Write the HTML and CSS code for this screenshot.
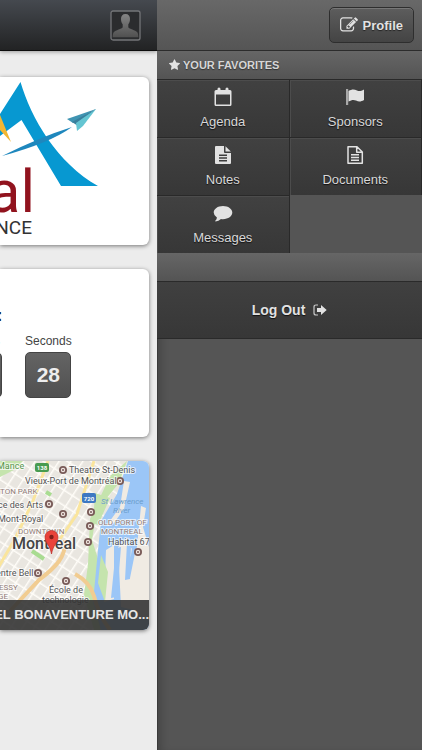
FILE: index.html
```html
<!DOCTYPE html>
<html lang="en">
<head>
<meta charset="utf-8">
<meta name="viewport" content="width=device-width, initial-scale=1">
<title>Event</title>
<link rel="stylesheet" href="styles.css">
</head>
<body>
<div class="app">
  <main class="page">
    <header class="topbar">
      <button class="avatar" aria-label="Account">
        <svg viewBox="0 0 31 31" width="31" height="31" aria-hidden="true">
          <defs><linearGradient id="person" x1="0" y1="0" x2="0" y2="1"><stop offset="0" stop-color="#858585"/><stop offset="1" stop-color="#505050"/></linearGradient></defs>
          <rect x="1" y="1" width="29" height="29" rx="2" fill="#2b2c2e" stroke="#747578" stroke-width="1.3"/>
          <path fill="url(#person)" d="M15.500 4c3 0 4.600 2 4.500 5 0 2-.6 4-1.700 5.300v3c1 2 7 2.600 9 5 .8 1 1 3 1 5H2.700c0-2 .2-4 1-5 2-2.400 8-3 9-5v-3C11.600 13 11 11 11 9c-.1-3 1.500-5 4.500-5z"/>
        </svg>
      </button>
    </header>
    <div class="cards">
      <section class="card">
        <svg class="art" viewBox="0 77 149 168" preserveAspectRatio="xMaxYMid slice" role="img" aria-label="Conference logo">
          <path fill="#0798d1" d="M0 114 20.500 82C31 118 57 163 98 186H61L21.500 120 0 136z"/>
          <path fill="#f2b632" d="M0 115 11 142 0 130z"/>
          <path fill="#1e87bd" d="M2 156Q40 137 72 127Q50 143 2 156z"/>
          <path fill="#3f94b2" d="M96 109 67 119 73 123z"/>
          <path fill="#397f9c" d="M96 109 72 122 78 126z"/>
          <path fill="#64c5d2" d="M96 109 76 123 77 131 83 126z"/>
          <text class="logo-name" x="35" y="212" text-anchor="end">al</text>
          <text class="logo-sub" x="32" y="234" text-anchor="end">NCE</text>
        </svg>
      </section>
      <section class="card countdown">
        <h2 class="countdown-title">:</h2>
        <div class="units">
          <div class="unit"><span>Minutes</span><b></b></div>
          <div class="unit"><span>Seconds</span><b>28</b></div>
        </div>
      </section>
      <section class="card map">
        <svg class="art" viewBox="0 461 149 169" preserveAspectRatio="xMaxYMid slice" role="img" aria-label="Map of Montreal">
          <defs>
            <pattern id="blocks" width="13" height="10" patternUnits="userSpaceOnUse" patternTransform="rotate(-57)"><rect width="13" height="10" fill="#e9e6e0"/><path d="M0 0H13M0 0V10" stroke="#fffdf8" stroke-width="3"/></pattern>
            <g id="poi"><circle r="4" fill="#795b58"/><circle r="2.200" fill="#eee4df"/><circle r="1" fill="#795b58"/></g>
          </defs>
          <rect y="461" width="149" height="169" fill="url(#blocks)"/>
          <path fill="#c5e4ad" d="M0 461h23l-9 9L0 477zM127 461l-8 22-22 27-5 30 8 25 7 65h-13l-10-35 4-31 2-45 20-43z"/>
          <path fill="#9bc6f7" d="M128 461h21v169h-48l-8-28 5-52 3-29 16-27z"/>
          <path fill="#f0ebe3" d="M124 481l6 1-6 27-10 14-7 2 13-18zM141 506l5 2-3 19 6 20v72h-15l-3-61 6-11zM106 550l8-5v54l-10 3zM118 547l8-5 8 9v59l-13-3z"/>
          <path fill="#9bc6f7" d="M116 548l5-1-4 50-6 1zM127 543l4 1-1 35-5 1zM132 548l4 0-6 30-2-2z"/>
          <path fill="#c5e4ad" d="M95 493l15 5-12 27-5-2zM101 555l7 17-3 30-7-19z"/>
          <path d="M48 461 33 501 15 539-2 568M94 461 77 514 60 539" fill="none" stroke="#fae59d" stroke-width="3"/>
          <path d="M65 540C66 557 56 567 39 580L10 611M75 574q15 8 19 22 4 18 16 34" fill="none" stroke="#f1cc91" stroke-width="4"/>
          <path d="M32 551l12 8M46 492l5 3" stroke="#a9dc91" stroke-width="4"/>
          <rect x="35" y="463" width="14" height="9" rx="2" fill="#489b50"/><text class="road" x="42" y="470">138</text>
          <rect x="82" y="493" width="14" height="10" rx="2" fill="#3e78c2"/><text class="road" x="89" y="501">720</text>
          <use href="#poi" x="63" y="470"/><use href="#poi" x="120" y="481"/><use href="#poi" x="49" y="504"/><use href="#poi" x="63" y="514"/><use href="#poi" x="91" y="512"/><use href="#poi" x="90" y="526"/><use href="#poi" x="88" y="542"/><use href="#poi" x="138" y="552"/><use href="#poi" x="38" y="573"/><use href="#poi" x="66" y="581"/>
          <g class="label">
            <text class="park" x="-3" y="469">Mance</text>
            <text x="69" y="473">Theatre St-Denis</text>
            <text x="25" y="484">Vieux-Port de Montréal</text>
            <text class="area" x="0" y="494">TON PARK</text>
            <text x="-2" y="508">ce des Arts</text>
            <text x="-2" y="522">Mont-Royal</text>
            <text class="area" x="18" y="534">DOWNTOWN</text>
            <text class="river" x="101" y="504">St Lawrence</text>
            <text class="river" x="113" y="513">River</text>
            <text class="area" x="98" y="525">OLD PORT OF</text>
            <text class="area" x="101" y="534">MONTREAL</text>
            <text x="108" y="545">Habitat 67</text>
            <text x="-4" y="576">entre Bell</text>
            <text class="area" x="-1" y="590">ESSY</text>
            <text class="area" x="-2" y="599">GE</text>
            <text x="49" y="593">École de</text>
            <text x="42" y="603">technologie</text>
            <text class="city" x="12" y="549">Montreal</text>
          </g>
          <path fill="#e9433b" stroke="#b8312b" stroke-width=".7" d="M51.500 554C50 545 45 543 45 537a6.500 6.500 0 0 1 13 0c0 6-5 8-6.500 17z"/><circle cx="51.500" cy="537" r="2.200" fill="#801d1a"/>
        </svg>
        <p class="caption">EL BONAVENTURE MO...</p>
      </section>
    </div>
  </main>

  <aside class="drawer">
    <header class="drawer-head">
      <button class="profile">
        <svg viewBox="0 0 1792 1792" width="18" height="18" aria-hidden="true"><path d="M888 1184l116-116-152-152-116 116v56h96v96h56zm440-720q-16-16-33 1l-350 350q-17 17-1 33t33-1l350-350q17-17 1-33zm80 594v190q0 119-84.500 203.500t-203.500 84.500h-832q-119 0-203.500-84.500t-84.500-203.500v-832q0-119 84.500-203.500t203.500-84.500h832q63 0 117 25 15 7 18 23 3 17-9 29l-49 49q-14 14-32 8-23-6-45-6h-832q-66 0-113 47t-47 113v832q0 66 47 113t113 47h832q66 0 113-47t47-113v-126q0-13 9-22l64-64q15-15 35-7t20 29zm-96-738l288 288-672 672h-288v-288zm444 132l-92 92-288-288 92-92q28-28 68-28t68 28l152 152q28 28 28 68t-28 68z"/></svg>
        Profile
      </button>
    </header>
    <h2 class="strip">
      <svg viewBox="0 0 1664 1792" width="11" height="12" aria-hidden="true"><path d="M1664 647q0 22-26 48l-363 354 86 500q1 7 1 20 0 21-10.500 35.500t-30.500 14.500q-19 0-40-12l-449-236-449 236q-22 12-40 12-21 0-31.500-14.500t-10.500-35.500q0-6 2-20l86-500-364-354q-25-27-25-48 0-37 56-46l502-73 225-455q19-41 49-41t49 41l225 455 502 73q56 9 56 46z"/></svg>
      YOUR FAVORITES
    </h2>
    <nav class="tiles">
      <a class="tile" href="#agenda">
        <svg viewBox="0 0 20 20" width="20" height="20" aria-hidden="true"><path fill-rule="evenodd" d="M3 3h1.500V2q0-1.500 1.500-1.500T7.500 2v1h5V2q0-1.500 1.500-1.500T15.500 2v1H17q1.500 0 1.500 1.500v13Q18.500 19 17 19H3q-1.500 0-1.500-1.500v-13Q1.500 3 3 3zM3 7.500v10h14v-10z"/></svg>
        Agenda
      </a>
      <a class="tile" href="#sponsors">
        <svg viewBox="0 0 20 20" width="20" height="20" aria-hidden="true"><path fill="#a8a8a8" d="M1 2h2.200v16H1z"/><path d="M3.500 4C7 2 9 2 12 3.500c2.500 1.200 4 .5 7-1V13c-3 1.700-5 2-8 .6-2.500-1.200-4.500-.6-7.500.9z"/></svg>
        Sponsors
      </a>
      <a class="tile" href="#notes">
        <svg viewBox="0 0 20 20" width="20" height="20" aria-hidden="true"><path fill-rule="evenodd" d="M3 1h8v6q0 1 1 1h6v10q0 1-1 1H3q-1 0-1-1V2q0-1 1-1zM6 9.500V11h8V9.500zM6 12.300v1.400h8v-1.400zM6 15v1.500h8V15z"/><path d="M12.500 1.200 17.800 6.500h-5.300z"/></svg>
        Notes
      </a>
      <a class="tile" href="#documents">
        <svg viewBox="0 0 20 20" width="20" height="20" aria-hidden="true"><path fill="none" stroke="#e2e2e2" stroke-width="1.500" stroke-linejoin="round" d="M3 1.700h9L17.300 7v11.300H3zM11.700 2v5.300H17"/><path d="M6 9h8v1.400H6zM6 11.800h8v1.400H6zM6 14.600h8V16H6z"/></svg>
        Documents
      </a>
      <a class="tile" href="#messages">
        <svg viewBox="0 0 20 20" width="20" height="20" aria-hidden="true"><path d="M10 3c5.300 0 9.300 2.900 9.300 6.600s-4 6.600-9.300 6.600q-1 0-2-.2-2.300 2.300-5.500 2.500-.7-.3 0-.9 1.300-1.200 1.400-3.100Q.700 12.500.700 9.600C.700 5.900 4.700 3 10 3z"/></svg>
        Messages
      </a>
    </nav>
    <div class="strip"></div>
    <button class="logout">
      Log Out
      <svg viewBox="0 0 14 12" width="14" height="12" aria-hidden="true"><path fill="none" stroke="#c9c9c9" stroke-width="1.200" d="M5 1H3Q1 1 1 3v6q0 2 2 2h2"/><path d="M4 4h4V1l5.700 5L8 11V8H4z"/></svg>
    </button>
  </aside>
</div>
</body>
</html>
```
FILE: styles.css
```css
* {
  box-sizing: border-box;
}

body {
  margin: 0;
  background: #555;
  color: #e2e2e2;
  font-family: "Liberation Sans", Arial, sans-serif;
}

button {
  font: inherit;
  color: inherit;
  border: 0;
  cursor: pointer;
}

svg {
  display: block;
  fill: #e2e2e2;
}

.app {
  display: grid;
  grid-template-columns: 1fr 265px;
  min-height: 100vh;
}

/* Page pushed aside by the drawer */
.page {
  min-width: 0;
  background: #ececec;
}

.topbar {
  display: flex;
  align-items: center;
  justify-content: flex-end;
  height: 51px;
  padding-right: 16px;
  background: linear-gradient(#45494f, #222324);
  border-bottom: 1px solid #0c0c0c;
  box-shadow: 0 1px 4px rgba(0, 0, 0, 0.35);
}

.avatar {
  padding: 0;
  background: none;
}

.cards {
  display: grid;
  gap: 24px;
  padding: 26px 8px 24px 0;
}

.card {
  height: 168px;
  overflow: hidden;
  background: #fff;
  border-radius: 0 6px 6px 0;
  box-shadow: 0 1px 4px rgba(0, 0, 0, 0.5);
}

.art {
  width: 100%;
  height: 100%;
}

.logo-name {
  font: 60px Roboto, sans-serif;
  fill: #91131e;
}

.logo-sub {
  font: 19px Roboto, sans-serif;
  fill: #333;
}

.countdown {
  padding-top: 38px;
  color: #444;
}

.countdown-title {
  margin: 0 0 9px -3px;
  font-size: 16px;
  line-height: 18px;
  color: #111;
}

.units {
  display: flex;
  justify-content: flex-end;
  gap: 23px;
  padding-right: 78px;
}

.unit {
  flex: none;
  display: grid;
  justify-items: center;
  gap: 3px;
  width: 46px;
  font-size: 12px;
  line-height: 15px;
}

.unit b {
  width: 46px;
  height: 46px;
  border: 1px solid #444;
  border-radius: 5px;
  background: linear-gradient(#646464, #505050);
  color: #eee;
  font-size: 21px;
  line-height: 44px;
  text-align: center;
}

.map {
  position: relative;
  height: 169px;
}

.label {
  font: 9px Roboto, sans-serif;
  fill: #555;
  stroke: #fff;
  stroke-width: 2px;
  stroke-opacity: 0.7;
  paint-order: stroke;
}

.label .area {
  font-size: 8px;
  fill: #927c76;
}

.label .park {
  fill: #56954a;
}

.label .river {
  font-size: 8px;
  font-style: italic;
  fill: #6b9dcc;
  stroke: none;
}

.label .city {
  font-size: 16px;
  font-weight: 500;
  fill: #444;
}

.road {
  font: bold 6px Roboto, sans-serif;
  fill: #fff;
  text-anchor: middle;
}

.caption {
  position: absolute;
  right: 0;
  bottom: 0;
  left: 0;
  display: flex;
  justify-content: flex-end;
  margin: 0;
  background: rgba(52, 52, 52, 0.9);
  color: #e6e6e6;
  font-size: 13px;
  font-weight: bold;
  line-height: 30px;
  white-space: nowrap;
}

/* Drawer */
.drawer {
  background: #555;
  box-shadow: inset 1px 0 0 #3a3a3a, inset 8px 0 8px -4px rgba(0, 0, 0, 0.2);
}

.drawer-head {
  display: flex;
  align-items: center;
  justify-content: flex-end;
  height: 51px;
  padding-right: 8px;
  background: linear-gradient(#686868, #555);
  border-bottom: 1px solid #2c2c2c;
}

.profile {
  display: flex;
  align-items: center;
  gap: 5px;
  height: 36px;
  padding: 0 10px;
  border: 1px solid #2e2e2e;
  border-radius: 5px;
  background: linear-gradient(#5d5d5d, #444);
  box-shadow: inset 0 1px 0 #777;
  font-size: 13px;
  font-weight: bold;
  text-shadow: 0 1px 1px #222;
}

.strip {
  display: flex;
  align-items: center;
  gap: 3px;
  height: 28px;
  margin: 0;
  padding-left: 12px;
  background: linear-gradient(#666, #545454);
  color: #d6d6d6;
  font-size: 11px;
  text-shadow: 0 1px 1px #333;
}

.tiles {
  display: grid;
  grid-template-columns: 1fr 1fr;
}

.tile {
  display: flex;
  flex-direction: column;
  align-items: center;
  gap: 7px;
  height: 58px;
  padding-top: 7px;
  border: 1px solid #292929;
  border-width: 1px 1px 0 0;
  background: linear-gradient(#414141, #373737);
  box-shadow: inset 1px 1px 0 #4c4c4c;
  color: #d8d8d8;
  font-size: 13px;
  line-height: 16px;
  text-decoration: none;
  text-shadow: 0 1px 1px #111;
}

.logout {
  display: flex;
  align-items: center;
  justify-content: center;
  gap: 8px;
  width: 100%;
  height: 58px;
  border: 1px solid #2a2a2a;
  border-width: 1px 0;
  background: linear-gradient(#404040, #373737);
  font-size: 14px;
  font-weight: bold;
  text-shadow: 0 1px 1px #111;
}
```
